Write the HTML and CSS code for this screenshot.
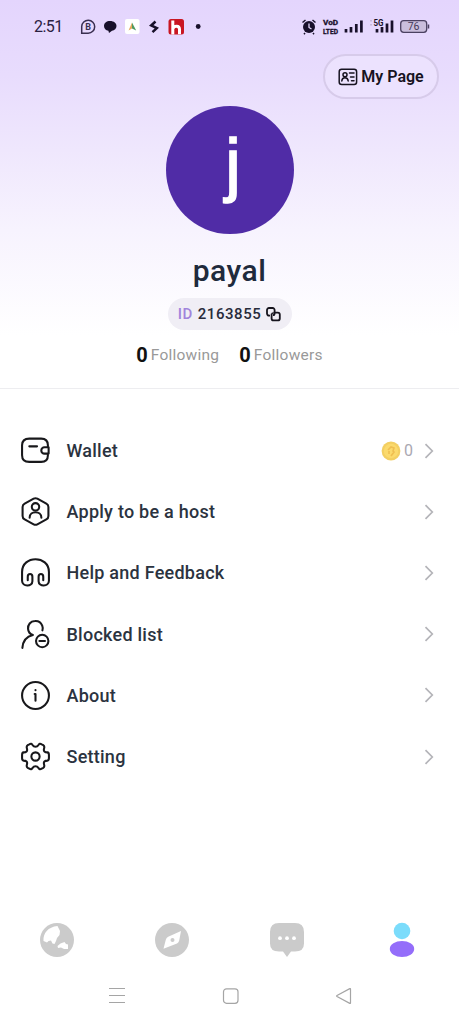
FILE: index.html
```html
<!DOCTYPE html>
<html lang="en">
<head>
<meta charset="utf-8">
<title>Profile</title>
<link rel="stylesheet" href="styles.css">
</head>
<body>
<div class="screen">
  <header class="profile">
    <div class="status">
      <span class="time">2:51</span>
      <svg class="status-left" width="124" height="18" viewBox="80 18 124 18">
        <path d="M81.700 33.200V26.500A6.500 6.500 0 1 1 88.200 33.200Z" fill="none" stroke="#392e50" stroke-width="1.500"/>
        <text x="88.200" y="30" class="badge-b">B</text>
        <path d="M110 21c4 0 6.500 2.200 6.500 5 0 2.600-2 4.500-4.500 4.800L109 33l-.6-2.300c-2.600-.4-4.400-2.200-4.400-4.700 0-3 2.500-5 6-5z" fill="#18102a"/>
        <rect x="125" y="19" width="14.500" height="15" rx="2" fill="#fff"/>
        <path d="M132 22.500l-3.500 8 3.500-2z" fill="#e7a65c"/><path d="M132 22.500l4.200 8-4.200-2z" fill="#4e9a61"/>
        <path d="M155.500 21.500l-4.300 4 5.600 2.600-4.300 4" fill="none" stroke="#18102a" stroke-width="2.500"/>
        <rect x="168.500" y="19" width="15.500" height="15.500" rx="2.500" fill="#c91622"/>
        <path d="M172.800 20.500v14M173 28.500c1-3 6.500-3.500 6.500.8v5" fill="none" stroke="#fff" stroke-width="3"/>
        <circle cx="198.200" cy="26.500" r="2.400" fill="#18102a"/>
      </svg>
      <svg class="status-right" width="130" height="20" viewBox="300 17 130 20">
        <circle cx="309" cy="27" r="6" fill="#18102a"/>
        <path d="M302.500 22.500l3-2.500M315.500 22.500l-3-2.500M305 33l-1 1.200M313 33l1 1.200" stroke="#18102a" stroke-width="1.500"/>
        <path d="M309 23.500v4l2.500 1.500" fill="none" stroke="#e5d9fc" stroke-width="1.300"/>
        <text x="323" y="25.300" class="volte" textLength="15" lengthAdjust="spacingAndGlyphs">VoD</text>
        <text x="323" y="33.500" class="volte" textLength="15" lengthAdjust="spacingAndGlyphs">LTED</text>
        <path d="M346 29v3.500M351 27v5.500M356.300 24v8.500M361.400 20.500v12M377 29v3.500M382 27v5.500M387 23.500v9M392 20.500v12" stroke="#18102a" stroke-width="2.700"/>
        <text x="373.500" y="25.500" class="network" textLength="10" lengthAdjust="spacingAndGlyphs">5G</text>
        <path d="M371 20v1.500M371 24v1.500" stroke="#a69cb7"/>
        <rect x="400.700" y="20.700" width="26" height="11.600" rx="3" fill="#cabedc" stroke="#4b4161" stroke-width="1.300"/>
        <path d="M428.500 24.500v4" stroke="#4b4161" stroke-width="1.500"/>
        <text x="413.600" y="30.300" class="battery">76</text>
      </svg>
    </div>
    <div class="page-button">
      <svg width="20" height="18" viewBox="0 0 20 18" fill="none" stroke="#171321" stroke-width="1.500" stroke-linecap="round">
        <rect x="1.200" y="1.200" width="17.400" height="15.400" rx="2.500"/>
        <circle cx="7" cy="6.700" r="2"/><path d="M3.800 13c.3-4.300 6-4.300 6.400 0M11.500 5h4.500M12.500 9H16M13.500 12.800H16"/>
      </svg>
      <span>My Page</span>
    </div>
    <div class="avatar"><span>j</span></div>
    <h1>payal</h1>
    <div class="user-id">
      <b>ID</b><span>2163855</span>
      <svg width="15" height="15" viewBox="0 0 15 15" fill="none" stroke="#16141d" stroke-width="1.800">
        <path d="M4 8.600H3a2 2 0 0 1-2-2V3a2 2 0 0 1 2-2h3.600a2 2 0 0 1 2 2v3.200q0 2-1.600 2"/><rect x="5.600" y="5.600" width="8.200" height="7.800" rx="2"/><path d="M5 6.500V5h2.500" stroke="#f0eef5" stroke-width="1"/>
      </svg>
    </div>
    <div class="stats">
      <div><b>0</b><span>Following</span></div>
      <div><b>0</b><span>Followers</span></div>
    </div>
  </header>

  <main class="menu">
    <div class="row">
      <svg class="icon" viewBox="0 0 30 30"><path d="M27 11.500V10c0-4-2.500-6.500-6.500-6.500H9C4.500 3.500 2 6 2 10v9.500C2 24 4.500 26 9 26h11.500c4 0 6.500-2.200 6.500-6.500V18M27.700 11.800h-4a3 3 0 0 0 0 6.200h4zM9 11h7.500"/></svg>
      <span class="label">Wallet</span>
      <span class="balance"><svg width="20" height="20" viewBox="0 0 20 20"><circle cx="10" cy="10" r="9.400" fill="#f3cf62"/><circle cx="10" cy="10" r="7.200" fill="#fbda6c"/><path d="M7 9l3-3 3 1-1 3 1 1-3 4M8 10v3" fill="none" stroke="#efbe50" stroke-width="1.600"/></svg><span>0</span></span>
      <svg class="chevron" viewBox="0 0 10 16"><path d="M1.500 1.200L8.300 8l-6.800 6.800"/></svg>
    </div>
    <div class="row">
      <svg class="icon" viewBox="0 0 30 30"><path d="M13.200 2.600q1.800-1 3.600 0l8.700 4.800q2 1.100 2 3.300v8.600q0 2.200-2 3.300l-8.700 4.800q-1.800 1-3.600 0l-8.700-4.800q-2-1.100-2-3.300v-8.600q0-2.200 2-3.300z"/><circle cx="15" cy="10.500" r="3.600"/><path d="M9.300 21c0-7 11.400-7 11.400 0"/></svg>
      <span class="label">Apply to be a host</span>
      <svg class="chevron" viewBox="0 0 10 16"><path d="M1.500 1.200L8.300 8l-6.800 6.800"/></svg>
    </div>
    <div class="row">
      <svg class="icon" viewBox="0 0 30 30"><path d="M7.500 22.500V19c0-3.300 4.500-3.300 4.500 0v4.500c0 5.500-10 5.500-10-.5v-8.500c0-16.500 26-16.500 26 0V23c0 6-10 6-10 .5V19c0-3.300 4.500-3.300 4.500 0v3.500"/></svg>
      <span class="label">Help and Feedback</span>
      <svg class="chevron" viewBox="0 0 10 16"><path d="M1.500 1.200L8.300 8l-6.800 6.800"/></svg>
    </div>
    <div class="row">
      <svg class="icon" viewBox="0 0 30 30"><path d="M21.700 11c.5-1.200.4-3-.2-4.500-1.300-3.300-4-4.700-7-4.500-4.500.2-7 3.500-6.700 7.500.2 2.800 1.800 5 4.700 6C6 17 2.800 21.500 2.300 28"/><circle cx="21.500" cy="21.300" r="6"/><path d="M18.800 21.300h5.400"/></svg>
      <span class="label">Blocked list</span>
      <svg class="chevron" viewBox="0 0 10 16"><path d="M1.500 1.200L8.300 8l-6.800 6.800"/></svg>
    </div>
    <div class="row">
      <svg class="icon" viewBox="0 0 30 30"><circle cx="15" cy="15" r="13"/><path d="M14.200 13.500h.8v6.500M15 9.700v.2"/></svg>
      <span class="label">About</span>
      <svg class="chevron" viewBox="0 0 10 16"><path d="M1.500 1.200L8.300 8l-6.800 6.800"/></svg>
    </div>
    <div class="row">
      <svg class="icon" viewBox="0 0 30 30"><path d="M12.300 4.100C11.500 2.500 10.500 2.300 9 3.200L7.500 4C6 5 6.200 5.700 6.700 7.300 7.500 10 6 11 3.500 11 2.200 11.200 2 12 2 13.500v3C2 18 2.200 18.800 3.500 19c2.500 0 4 1 3.200 3.700C6.200 24.300 6 25 7.500 26l1.500.8c1.500.9 2.500.7 3.300-.9 1.200-2 4.200-2 5.400 0 .8 1.600 1.800 1.800 3.300.9l1.500-.8c1.500-1 1.300-1.700.8-3.300-.8-2.700.7-3.700 3.200-3.700 1.300-.2 1.500-1 1.500-2.500v-3c0-1.500-.2-2.300-1.500-2.500-2.500 0-4-1-3.200-3.700.5-1.600.7-2.300-.8-3.300L21 3.200c-1.500-.9-2.500-.7-3.300.9-1.200 2-4.200 2-5.400 0z"/><circle cx="15" cy="15" r="4"/></svg>
      <span class="label">Setting</span>
      <svg class="chevron" viewBox="0 0 10 16"><path d="M1.500 1.200L8.300 8l-6.800 6.800"/></svg>
    </div>
  </main>

  <nav class="tabs">
    <svg viewBox="0 0 36 36"><circle cx="18" cy="18" r="17" fill="#cbcbcb"/><path d="M4.500 19c-.5-8 4.500-14 14-15l1.500 3 1 2-.5 4-2.500 3-1 3-1.500 3-2-.5-1.500-3-2.500.5-1.500 1.500zM18.500 24l3-2.500 4-1.500 1.500 2 2 .5v4.500h-4l-3-1.500-3 .5z" fill="#fff"/></svg>
    <svg viewBox="0 0 36 36"><circle cx="18" cy="18" r="17" fill="#cbcbcb"/><path d="M27 9l-1.800 9.500q-.4 2-2.200 3L9.500 26.800l2.300-9q.5-2 2.400-3z" fill="#fff"/><circle cx="18.500" cy="18" r="2" fill="#cbcbcb"/></svg>
    <svg viewBox="0 0 36 36"><path d="M10 1h16q9 0 9 9v11.500q0 8-9 8h-4L18 35l-4-5.500h-4q-9 0-9-8V10q0-9 9-9z" fill="#cbcbcb"/><g fill="#fff"><circle cx="11" cy="16.200" r="1.900"/><circle cx="18" cy="16.200" r="1.900"/><circle cx="25" cy="16.200" r="1.900"/></g></svg>
    <svg viewBox="0 0 36 36"><circle cx="18" cy="9" r="8.300" fill="#7bdcfb"/><ellipse cx="18" cy="27" rx="12.200" ry="8" fill="#946dfa"/></svg>
  </nav>
  <footer class="system-nav">
    <svg viewBox="0 0 20 20"><path d="M2 2.500h16M2 9.500h16M2 16.500h16"/></svg>
    <svg viewBox="0 0 20 20"><rect x="2.500" y="2.800" width="14.500" height="14.500" rx="3"/></svg>
    <svg viewBox="0 0 20 20"><path d="M16.500 3v14q0 .7-.7.400L3 10.500q-.8-.5 0-1L15.800 2.600q.7-.3.7.4z"/></svg>
  </footer>
</div>
</body>
</html>
```

FILE: styles.css
```css
* { box-sizing: border-box; }
body { margin: 0; background: #fff; font-family: Roboto, "Liberation Sans", sans-serif; }
svg { display: block; flex: none; }
.screen { width: 459px; height: 1024px; display: flex; flex-direction: column; overflow: hidden; }
.profile {
  height: 389px;
  flex: none;
  display: flex;
  flex-direction: column;
  align-items: center;
  border-bottom: 1px solid #ededf0;
  background: linear-gradient(#e4d5fd 0, #e8dcfd 75px, #efe7fd 150px, #f7f3fe 230px, #fff 335px);
}
.status { width: 100%; height: 54px; padding: 0 29px 0 34px; display: flex; align-items: center; color: #2b203f; }
.time { width: 46px; font-size: 16px; line-height: 20px; letter-spacing: -0.5px; }
.status-right { margin-left: auto; }
.badge-b { font: 700 9px Roboto, sans-serif; text-anchor: middle; fill: #392e50; }
.volte { font: 700 7px Roboto, sans-serif; fill: #18102a; stroke: #18102a; stroke-width: 0.3px; }
.network { font: 700 8.500px Roboto, sans-serif; fill: #18102a; }
.battery { font: 400 10.500px Roboto, sans-serif; text-anchor: middle; fill: #453a5a; }
.page-button {
  width: 116px;
  height: 45px;
  flex: none;
  margin-right: 20px;
  align-self: flex-end;
  border: 2px solid #d7cbea;
  border-radius: 23px;
  display: flex;
  align-items: center;
  justify-content: center;
  gap: 3px;
  background: #ece2fe;
  color: #171321;
  font-size: 16px;
  font-weight: 600;
}
.avatar {
  width: 128px;
  height: 128px;
  flex: none;
  margin-top: 7px;
  border-radius: 50%;
  background: #502ca6;
  color: #fff;
  display: flex;
  justify-content: center;
  padding-left: 7px;
  font-family: "Liberation Sans", sans-serif;
  font-size: 70px;
  line-height: 117px;
  -webkit-text-stroke: 1.500px #fff;
}
h1 { margin: 17px 0 0; font-size: 30px; line-height: 40px; font-weight: 500; letter-spacing: 0.5px; color: #202a3c; }
.user-id {
  height: 32px;
  width: 124px;
  margin-top: 7px;
  border-radius: 16px;
  background: #f0eef5;
  display: flex;
  align-items: center;
  justify-content: center;
  font-size: 15px;
  font-weight: 500;
  letter-spacing: 0.55px;
  color: #272b3b;
}
.user-id b { margin-right: 5px; font-weight: 500; color: #a184dc; }
.user-id svg { margin-left: 5px; }
.stats { margin-top: 13px; display: flex; gap: 20px; line-height: 22px; }
.stats div { display: flex; align-items: center; gap: 3px; }
.stats b { font-size: 20px; color: #111; }
.stats span { padding-top: 1px; font-size: 15.500px; letter-spacing: 0.25px; color: #999; }
.menu { padding: 31px 25px 0 20px; }
.row { height: 61.200px; display: flex; align-items: center; }
.icon { width: 31px; height: 31px; fill: none; stroke: #18181b; stroke-width: 2; stroke-linecap: round; stroke-linejoin: round; }
.label { margin-left: 15.500px; margin-right: auto; font-size: 18px; font-weight: 500; letter-spacing: 0.25px; color: #2b3340; }
.balance { display: flex; align-items: center; gap: 3px; margin-right: 11px; color: #aaa8b2; font-size: 16px; }
.chevron { width: 10px; height: 16px; fill: none; stroke: #b4b4b9; stroke-width: 1.700; }
.tabs { margin-top: auto; height: 68px; padding: 12px 39px 0; display: flex; justify-content: space-between; }
.tabs svg { width: 36px; height: 36px; }
.system-nav { height: 46px; padding: 8px 105px 0 107px; display: flex; justify-content: space-between; }
.system-nav svg { width: 20px; height: 20px; fill: none; stroke: #a5a5a5; stroke-width: 1.200; }
```
